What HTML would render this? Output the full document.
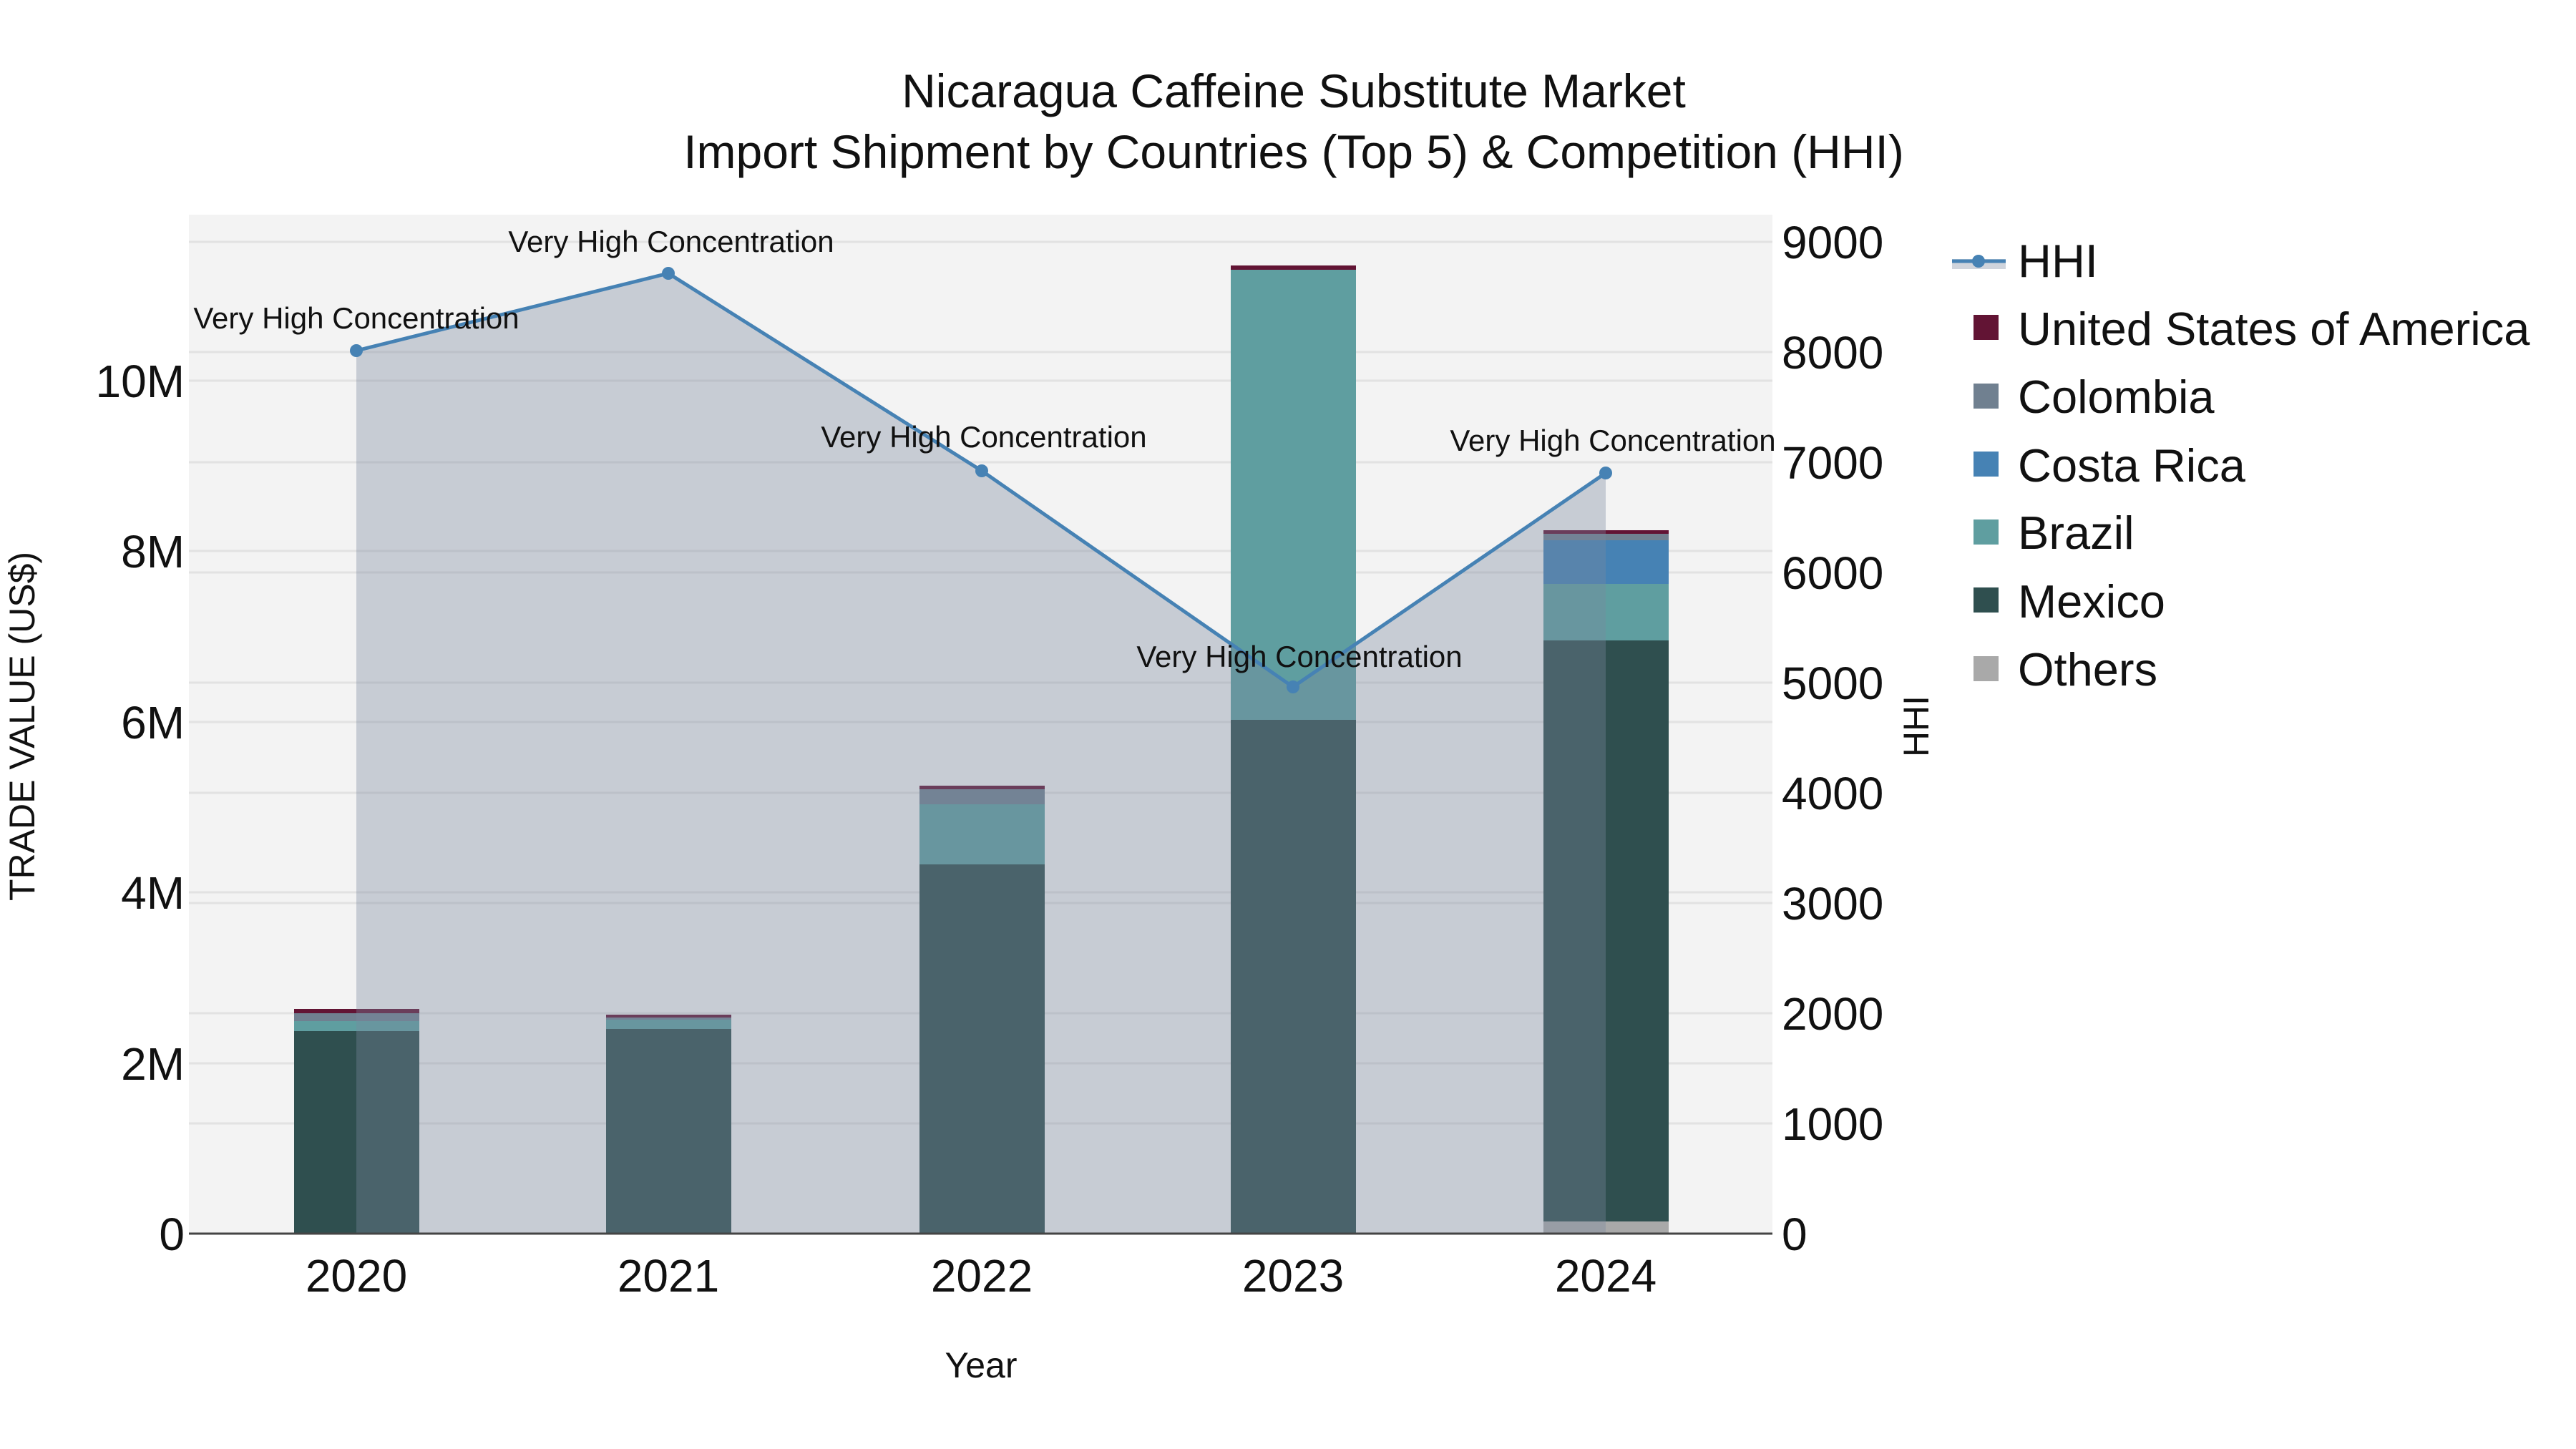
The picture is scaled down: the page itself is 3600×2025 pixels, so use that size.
<!DOCTYPE html>
<html><head><meta charset="utf-8"><style>
html,body{margin:0;padding:0;background:#fff;}
svg{display:block;font-family:"Liberation Sans",sans-serif;}
</style></head><body>
<svg width="3600" height="2025" viewBox="0 0 3600 2025" xmlns="http://www.w3.org/2000/svg">
<rect x="0" y="0" width="3600" height="2025" fill="#fff"/>
<text x="1808" y="150" font-size="66" text-anchor="middle" fill="#111">Nicaragua Caffeine Substitute Market</text>
<text x="1808" y="235" font-size="66" text-anchor="middle" fill="#111">Import Shipment by Countries (Top 5) &amp; Competition (HHI)</text>
<rect x="264" y="300" width="2213" height="1424" fill="#f3f3f3"/>
<g stroke="#e2e2e2" stroke-width="3">
<line x1="264" x2="2477" y1="1486" y2="1486"/><line x1="264" x2="2477" y1="1247" y2="1247"/><line x1="264" x2="2477" y1="1009" y2="1009"/><line x1="264" x2="2477" y1="770" y2="770"/><line x1="264" x2="2477" y1="532" y2="532"/>
<line x1="264" x2="2477" y1="1570" y2="1570"/><line x1="264" x2="2477" y1="1416" y2="1416"/><line x1="264" x2="2477" y1="1262" y2="1262"/><line x1="264" x2="2477" y1="1108" y2="1108"/><line x1="264" x2="2477" y1="954" y2="954"/><line x1="264" x2="2477" y1="800" y2="800"/><line x1="264" x2="2477" y1="646" y2="646"/><line x1="264" x2="2477" y1="492" y2="492"/><line x1="264" x2="2477" y1="338" y2="338"/>
</g>
<g>
<rect x="411" y="1441" width="175" height="283" fill="#2f4f4f"/>
<rect x="411" y="1427" width="175" height="14" fill="#5f9ea0"/>
<rect x="411" y="1416" width="175" height="11" fill="#708090"/>
<rect x="411" y="1410" width="175" height="6" fill="#621434"/>

<rect x="847" y="1438" width="175" height="286" fill="#2f4f4f"/>
<rect x="847" y="1425" width="175" height="13" fill="#5f9ea0"/>
<rect x="847" y="1422" width="175" height="3" fill="#708090"/>
<rect x="847" y="1418" width="175" height="4" fill="#621434"/>

<rect x="1285" y="1208" width="175" height="516" fill="#2f4f4f"/>
<rect x="1285" y="1124" width="175" height="84" fill="#5f9ea0"/>
<rect x="1285" y="1103" width="175" height="21" fill="#708090"/>
<rect x="1285" y="1098" width="175" height="5" fill="#621434"/>

<rect x="1720" y="1006" width="175" height="718" fill="#2f4f4f"/>
<rect x="1720" y="377" width="175" height="629" fill="#5f9ea0"/>
<rect x="1720" y="371" width="175" height="6" fill="#621434"/>

<rect x="2157" y="1707" width="175" height="17" fill="#a9a9a9"/>
<rect x="2157" y="895" width="175" height="812" fill="#2f4f4f"/>
<rect x="2157" y="816" width="175" height="79" fill="#5f9ea0"/>
<rect x="2157" y="755" width="175" height="61" fill="#4682b4"/>
<rect x="2157" y="746" width="175" height="9" fill="#708090"/>
<rect x="2157" y="741" width="175" height="5" fill="#621434"/>
</g>
<polygon points="498,490 934,382 1372,658 1807,960 2244,661 2244,1724 498,1724" fill="rgb(121,135,157)" fill-opacity="0.36"/>
<polyline points="498,490 934,382 1372,658 1807,960 2244,661" fill="none" stroke="#4682b4" stroke-width="5"/>
<g fill="#4682b4"><circle cx="498" cy="490" r="9"/><circle cx="934" cy="382" r="9"/><circle cx="1372" cy="658" r="9"/><circle cx="1807" cy="960" r="9"/><circle cx="2244" cy="661" r="9"/></g>
<line x1="264" x2="2477" y1="1724" y2="1724" stroke="#444" stroke-width="3"/>
<g font-size="42" text-anchor="middle" fill="#111">
<text x="498" y="459">Very High Concentration</text>
<text x="938" y="352">Very High Concentration</text>
<text x="1375" y="625">Very High Concentration</text>
<text x="1816" y="932">Very High Concentration</text>
<text x="2254" y="630">Very High Concentration</text>
</g>
<g font-size="64" text-anchor="end" fill="#111">
<text x="258" y="1747">0</text><text x="258" y="1509">2M</text><text x="258" y="1270">4M</text><text x="258" y="1032">6M</text><text x="258" y="793">8M</text><text x="258" y="555">10M</text>
</g>
<g font-size="64" text-anchor="start" fill="#111">
<text x="2490" y="1747">0</text><text x="2490" y="1593">1000</text><text x="2490" y="1439">2000</text><text x="2490" y="1285">3000</text><text x="2490" y="1131">4000</text><text x="2490" y="977">5000</text><text x="2490" y="823">6000</text><text x="2490" y="669">7000</text><text x="2490" y="515">8000</text><text x="2490" y="361">9000</text>
</g>
<g font-size="64" text-anchor="middle" fill="#111">
<text x="498" y="1805">2020</text><text x="934" y="1805">2021</text><text x="1372" y="1805">2022</text><text x="1807" y="1805">2023</text><text x="2244" y="1805">2024</text>
</g>
<text x="1371" y="1925" font-size="50" text-anchor="middle" fill="#111">Year</text>
<text transform="translate(48,1015) rotate(-90)" font-size="50" text-anchor="middle" fill="#111">TRADE VALUE (US$)</text>
<text transform="translate(2695,1015) rotate(-90)" font-size="50" text-anchor="middle" fill="#111">HHI</text>
<rect x="2728" y="362" width="75" height="14" fill="rgb(121,135,157)" fill-opacity="0.36"/>
<line x1="2728" x2="2803" y1="365" y2="365" stroke="#4682b4" stroke-width="5"/>
<circle cx="2765" cy="365" r="9" fill="#4682b4"/>
<rect x="2758" y="440" width="35" height="35" fill="#621434"/>
<rect x="2758" y="536" width="35" height="35" fill="#708090"/>
<rect x="2758" y="631" width="35" height="35" fill="#4682b4"/>
<rect x="2758" y="726" width="35" height="35" fill="#5f9ea0"/>
<rect x="2758" y="821" width="35" height="35" fill="#2f4f4f"/>
<rect x="2758" y="917" width="35" height="35" fill="#a9a9a9"/>
<g font-size="65" fill="#111">
<text x="2820" y="387">HHI</text>
<text x="2820" y="482">United States of America</text>
<text x="2820" y="577">Colombia</text>
<text x="2820" y="673">Costa Rica</text>
<text x="2820" y="767">Brazil</text>
<text x="2820" y="863">Mexico</text>
<text x="2820" y="958">Others</text>
</g>
</svg>
</body></html>
